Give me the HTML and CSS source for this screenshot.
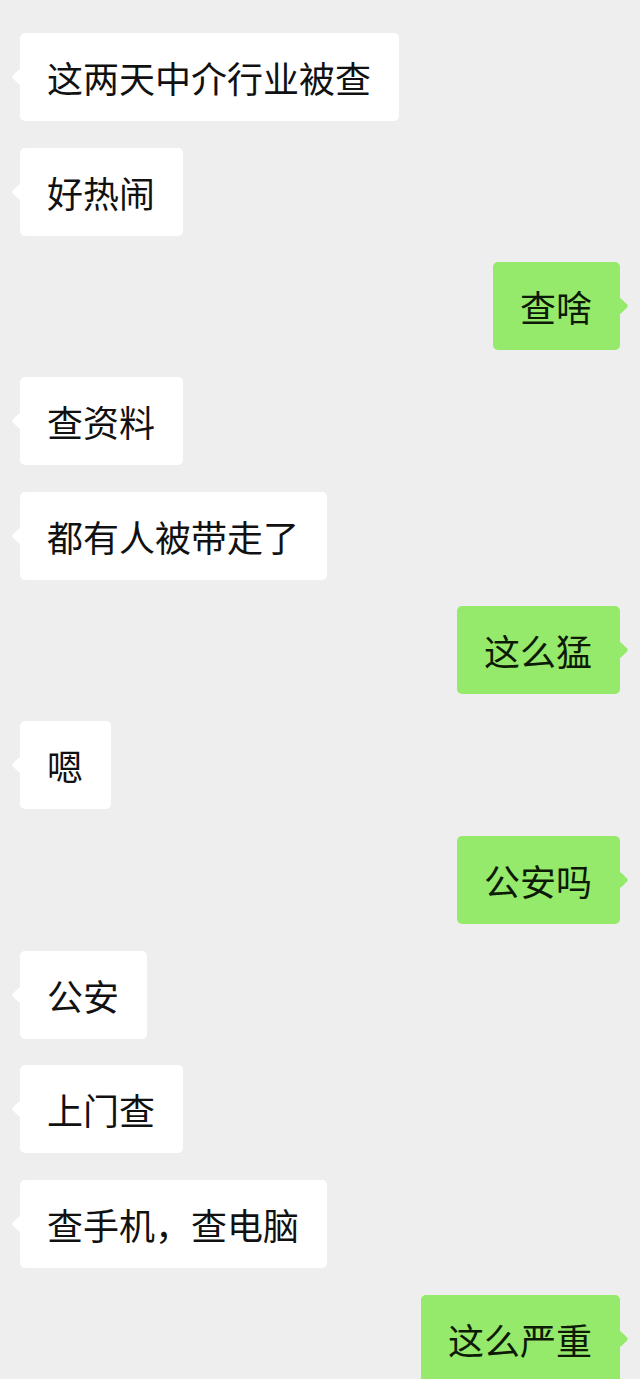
FILE: index.html
```html
<!DOCTYPE html>
<html lang="zh-CN">
<head>
    <meta charset="UTF-8">
    <meta name="viewport" content="width=device-width, initial-scale=1.0">
    <title>聊天记录</title>
    <link rel="stylesheet" href="styles.css">
</head>
<body>

<div class="chat">
    <div class="row left"><div class="bubble">这两天中介行业被查</div></div>
    <div class="row left"><div class="bubble">好热闹</div></div>
    <div class="row right"><div class="bubble">查啥</div></div>
    <div class="row left"><div class="bubble">查资料</div></div>
    <div class="row left"><div class="bubble">都有人被带走了</div></div>
    <div class="row right"><div class="bubble">这么猛</div></div>
    <div class="row left"><div class="bubble">嗯</div></div>
    <div class="row right"><div class="bubble">公安吗</div></div>
    <div class="row left"><div class="bubble">公安</div></div>
    <div class="row left"><div class="bubble">上门查</div></div>
    <div class="row left"><div class="bubble">查手机，查电脑</div></div>
    <div class="row right"><div class="bubble">这么严重</div></div>
</div>

</body>
</html>
```

FILE: styles.css
```css
body {
    font-family: "Noto Sans CJK SC", "Noto Sans", sans-serif;
    background-color: #eeeeee;
    color: #111111;
    margin: 0;
    overflow: hidden;
}
.chat {
    display: flex;
    flex-direction: column;
    gap: 26.7px;
    padding: 33px 20px 0;
}
.row {
    display: flex;
}
.row.right {
    justify-content: flex-end;
}
.bubble {
    position: relative;
    font-size: 36px;
    line-height: 50px;
    padding: 19px 28px 19px 27px;
    min-width: 36px;
    text-align: center;
    border-radius: 5px;
    background-color: #ffffff;
    white-space: nowrap;
}
/* little tail on the bubble side */
.bubble::before {
    content: "";
    position: absolute;
    top: 38px;
    width: 12px;
    height: 12px;
    border-radius: 2px;
    transform: rotate(45deg);
    background-color: inherit;
}
.left .bubble::before {
    left: -6px;
}
.right .bubble {
    background-color: #95e96b;
    color: #0c1a06;
}
.right .bubble::before {
    right: -6px;
}
```
